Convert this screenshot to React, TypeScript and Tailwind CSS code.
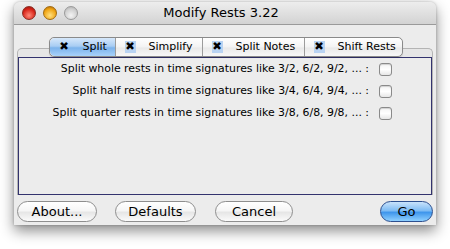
import React from "react";

const font = { fontFamily: '"DejaVu Sans", "Lucida Grande", sans-serif' };

function TabX({ plain }: { plain?: boolean }) {
  return (
    <span
      className={
        "inline-flex items-center justify-center w-[11px] h-[12px] text-[11.5px] leading-none text-black " +
        (plain ? "" : "bg-[#b9d3f2]")
      }
    >
      ✖
    </span>
  );
}

function Tab({ label, selected, first, last, width }: { label: string; selected?: boolean; first?: boolean; last?: boolean; width: string }) {
  return (
    <div
      className={
        "h-full flex items-center gap-[13px] pl-[9px] text-[11px] text-black whitespace-nowrap " +
        width +
        " " +
        (selected
          ? "bg-[linear-gradient(#d6e8fb_0%,#a9cdf3_45%,#7cb3ec_55%,#a8d2fa_100%)] "
          : "bg-[linear-gradient(#ffffff_0%,#f3f3f3_50%,#e9e9e9_55%,#f7f7f7_100%)] ") +
        (first ? "rounded-l-[5px] " : "") +
        (last ? "rounded-r-[5px] " : "border-r border-[#9c9c9c] ")
      }
    >
      <TabX plain={selected} />
      <span>{label}</span>
    </div>
  );
}

function Check() {
  return (
    <div className="w-[13px] h-[13px] rounded-[3px] border border-[#8a8a8a] bg-[linear-gradient(#f4f4f4,#ffffff_50%,#e6e6e6)] shadow-[inset_0_1px_1px_rgba(0,0,0,0.15)]" />
  );
}

function Row({ text }: { text: string }) {
  return (
    <div className="h-[22px] flex items-center justify-end pr-[39px] gap-[10px]">
      <span className="text-[10.9px] text-black whitespace-nowrap">{text}</span>
      <Check />
    </div>
  );
}

function Btn({ label, width }: { label: string; width: string }) {
  return (
    <div
      className={
        "h-[21px] rounded-full border border-[#8e8e8e] flex items-center justify-center text-[13px] text-black bg-[linear-gradient(#ffffff_0%,#f6f6f6_45%,#e6e6e6_55%,#fbfbfb_100%)] " +
        width
      }
    >
      {label}
    </div>
  );
}

export default function App() {
  return (
    <div className="w-[450px] h-[249px] bg-white pl-[14px] pt-[2px]" style={font}>
      <div className="w-[422px] h-[223px] rounded-t-[6px] bg-[#ececec] shadow-[0_6px_14px_rgba(0,0,0,0.45),0_0_3px_rgba(0,0,0,0.25)] flex flex-col overflow-hidden">
        {/* title bar */}
        <div className="h-[23px] flex items-center px-[8px] border-b border-[#9a9a9a] bg-[linear-gradient(#ededed,#d3d3d3)] relative">
          <div className="flex gap-[7px] items-center">
            <div className="w-[14px] h-[14px] rounded-full border border-[#8a2a22] bg-[radial-gradient(circle_at_50%_70%,#ff8a7a,#d8251a_60%,#8d1409)]" />
            <div className="w-[14px] h-[14px] rounded-full border border-[#a06a10] bg-[radial-gradient(circle_at_50%_70%,#ffe080,#f0a514_60%,#a55f05)]" />
            <div className="w-[14px] h-[14px] rounded-full border border-[#9a9a9a] bg-[radial-gradient(circle_at_50%_70%,#f4f4f4,#d0d0d0_60%,#a8a8a8)]" />
          </div>
          <div className="flex-1 text-center text-[13px] text-black pr-[64px]">Modify Rests 3.22</div>
        </div>
        {/* body */}
        <div className="flex-1 flex flex-col px-[3px]">
          <div className="mt-[12px] -mb-[9px] h-[20px] flex justify-center relative z-10 pl-[1px]">
            <div className="h-full flex rounded-[5px] border border-[#8a8a8a] shadow-[0_1px_1px_rgba(0,0,0,0.15)]">
              <Tab label="Split" selected first width="w-[66px]" />
              <Tab label="Simplify" width="w-[87px]" />
              <Tab label="Split Notes" width="w-[102px]" />
              <Tab label="Shift Rests" last width="w-[97px]" />
            </div>
          </div>
          <div className="h-[147px] rounded-t-[5px] border-t border-x border-[#b4b4b4] flex flex-col bg-[#e6e6e6]">
            <div className="h-[8px]" />
            <div className="flex-1 border border-[#33336e] bg-[#ececec]">
              <Row text="Split whole rests in time signatures like 3/2, 6/2, 9/2, ... :" />
              <Row text="Split half rests in time signatures like 3/4, 6/4, 9/4, ... :" />
              <Row text="Split quarter rests in time signatures like 3/8, 6/8, 9/8, ... :" />
            </div>
          </div>
          <div className="mt-[6px] flex items-center">
            <Btn label="About..." width="w-[80px]" />
            <div className="w-[18px]" />
            <Btn label="Defaults" width="w-[81px]" />
            <div className="w-[19px]" />
            <Btn label="Cancel" width="w-[78px]" />
            <div className="flex-1" />
            <div className="w-[53px] h-[21px] rounded-full border border-[#2c4f8f] flex items-center justify-center text-[13px] text-black bg-[linear-gradient(#c9e3fb_0%,#7fbcf4_45%,#3f96ec_55%,#8fd0ff_100%)]">
              Go
            </div>
          </div>
        </div>
      </div>
    </div>
  );
}
